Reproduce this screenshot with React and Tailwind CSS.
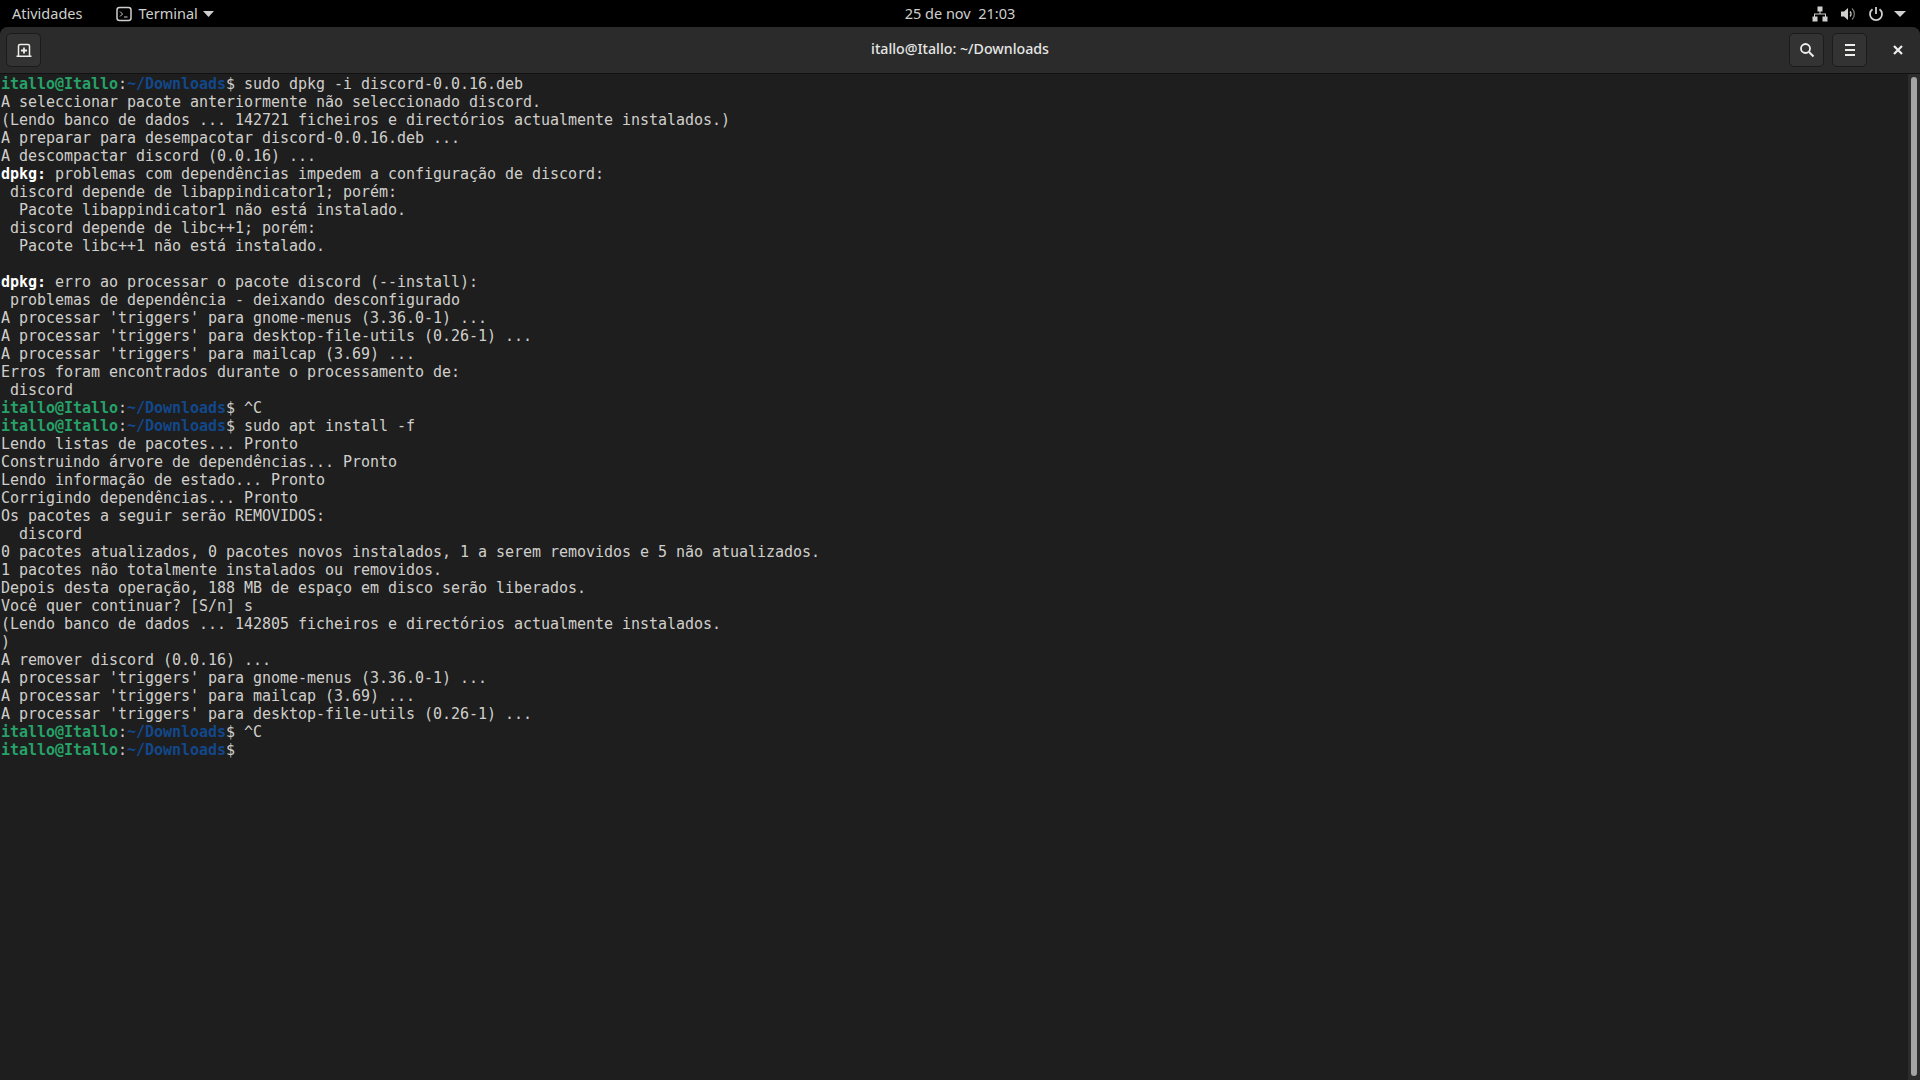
const lines = [
  { cmd: 'sudo dpkg -i discord-0.0.16.deb' },
  'A seleccionar pacote anteriormente não seleccionado discord.',
  '(Lendo banco de dados ... 142721 ficheiros e directórios actualmente instalados.)',
  'A preparar para desempacotar discord-0.0.16.deb ...',
  'A descompactar discord (0.0.16) ...',
  { bold: 'dpkg:', text: ' problemas com dependências impedem a configuração de discord:' },
  ' discord depende de libappindicator1; porém:',
  '  Pacote libappindicator1 não está instalado.',
  ' discord depende de libc++1; porém:',
  '  Pacote libc++1 não está instalado.',
  '',
  { bold: 'dpkg:', text: ' erro ao processar o pacote discord (--install):' },
  ' problemas de dependência - deixando desconfigurado',
  "A processar 'triggers' para gnome-menus (3.36.0-1) ...",
  "A processar 'triggers' para desktop-file-utils (0.26-1) ...",
  "A processar 'triggers' para mailcap (3.69) ...",
  'Erros foram encontrados durante o processamento de:',
  ' discord',
  { cmd: '^C' },
  { cmd: 'sudo apt install -f' },
  'Lendo listas de pacotes... Pronto',
  'Construindo árvore de dependências... Pronto',
  'Lendo informação de estado... Pronto',
  'Corrigindo dependências... Pronto',
  'Os pacotes a seguir serão REMOVIDOS:',
  '  discord',
  '0 pacotes atualizados, 0 pacotes novos instalados, 1 a serem removidos e 5 não atualizados.',
  '1 pacotes não totalmente instalados ou removidos.',
  'Depois desta operação, 188 MB de espaço em disco serão liberados.',
  'Você quer continuar? [S/n] s',
  '(Lendo banco de dados ... 142805 ficheiros e directórios actualmente instalados.',
  ')',
  'A remover discord (0.0.16) ...',
  "A processar 'triggers' para gnome-menus (3.36.0-1) ...",
  "A processar 'triggers' para mailcap (3.69) ...",
  "A processar 'triggers' para desktop-file-utils (0.26-1) ...",
  { cmd: '^C' },
  { cmd: '' },
];

function Line({ line }) {
  if (typeof line === 'string') {
    return <div className="h-[18px]">{line}</div>;
  }
  if (line.bold) {
    return (
      <div className="h-[18px]">
        <span className="font-bold text-white">{line.bold}</span>
        {line.text}
      </div>
    );
  }
  return (
    <div className="h-[18px]">
      <span className="font-bold text-[#26a269]">itallo@Itallo</span>
      :
      <span className="font-bold text-[#12488b]">~/Downloads</span>
      $ {line.cmd}
    </div>
  );
}

function HeaderButton({ children }) {
  return (
    <button className="w-[35px] h-[34px] flex items-center justify-center rounded-[5px] border border-[#1b1b1b] bg-[#333333] text-[#eeeeec]">
      {children}
    </button>
  );
}

export default function App() {
  return (
    <div className="w-[1920px] h-[1080px] overflow-hidden bg-black flex flex-col font-['Noto_Sans',sans-serif]">
      {/* top bar */}
      <div className="h-[27px] shrink-0 grid grid-cols-[1fr_auto_1fr] items-center text-[14.5px] text-[#cfcfcd]">
        <div className="flex items-center pl-[12px]">
          <span>Atividades</span>
          <svg className="ml-[34px]" width="16" height="16" viewBox="0 0 16 16" fill="none">
            <rect x="1" y="1.500" width="14" height="13" rx="2.500" stroke="currentColor" strokeWidth="1.500" />
            <path d="M4 5.500 6.500 8 4 10.500M8 11h3.500" stroke="currentColor" strokeWidth="1" />
          </svg>
          <span className="ml-[6px]">Terminal</span>
          <svg className="ml-[5px]" width="11" height="6" viewBox="0 0 11 6">
            <path d="M0 0h11L5.500 6z" fill="currentColor" />
          </svg>
        </div>
        <div>25 de nov&nbsp; 21:03</div>
        <div className="flex items-center justify-end gap-[12px] pr-[14px]">
          <svg width="16" height="16" viewBox="0 0 16 16" fill="currentColor">
            <path d="M5.500 0.500h5v5H8.500V7.500H14v3h1.500v5h-5v-5H13V8.500H3v2h2.500v5h-5v-5H2v-3h5.500v-2h-2z" />
          </svg>
          <svg width="16" height="16" viewBox="0 0 16 16" fill="none">
            <path d="M1 5.500h3L8 2v12l-4-3.500H1z" fill="currentColor" />
            <path d="M10 5.500a3.500 3.500 0 0 1 0 5" stroke="currentColor" strokeWidth="1.300" />
            <path d="M12 2.500a7.500 7.500 0 0 1 0 11" stroke="#777777" strokeWidth="1.300" />
          </svg>
          <svg width="16" height="16" viewBox="0 0 16 16" fill="none" stroke="currentColor" strokeWidth="1.800">
            <path d="M8 1v7" />
            <path d="M4.500 3.300a6 6 0 1 0 7 0" />
          </svg>
          <svg width="12" height="6" viewBox="0 0 12 6" className="-ml-[2px]">
            <path d="M0 0h12L6 6z" fill="currentColor" />
          </svg>
        </div>
      </div>

      {/* window */}
      <div className="flex-1 flex flex-col rounded-t-[8px] overflow-hidden bg-[#1e1e1e]">
        <div className="h-[47px] shrink-0 bg-[#2b2b2b] border-b border-[#111111] grid grid-cols-[1fr_auto_1fr] items-center">
          <div className="flex items-center pl-[6px]">
            <HeaderButton>
              <svg width="16" height="16" viewBox="0 0 16 16" fill="none" stroke="currentColor">
                <path d="M2.500 14V4a1.500 1.500 0 0 1 1.500-1.500h8A1.500 1.500 0 0 1 13.500 4v10" strokeWidth="1.500" />
                <path d="M0.500 14.300h15" strokeWidth="1.400" />
                <path d="M8 5.500v6M5 8.500h6" strokeWidth="1.800" />
              </svg>
            </HeaderButton>
          </div>
          <div className="pb-[2px] text-center text-[14.2px] font-medium text-[#e6e6e4]">itallo@Itallo: ~/Downloads</div>
          <div className="flex items-center justify-end gap-[8px]">
            <HeaderButton>
              <svg width="16" height="16" viewBox="0 0 16 16" fill="none" stroke="currentColor">
                <circle cx="6.500" cy="6.500" r="4.500" strokeWidth="1.800" />
                <path d="M10 10l4.500 4.500" strokeWidth="2" />
              </svg>
            </HeaderButton>
            <HeaderButton>
              <svg width="12" height="12" viewBox="0 0 12 12" fill="currentColor">
                <path d="M1 0h10v2H1zM1 5h10v2H1zM1 10h10v2H1z" />
              </svg>
            </HeaderButton>
            <div className="w-[45px] flex items-center justify-center text-[#eeeeec]">
              <svg width="10" height="10" viewBox="0 0 10 10" fill="none" stroke="currentColor" strokeWidth="2.200">
                <path d="M1 1l8 8M9 1l-8 8" />
              </svg>
            </div>
          </div>
        </div>

        <div className="flex-1 flex min-h-0">
          <div className="flex-1 pl-[1px] pt-[1px] text-[15px] tracking-[-0.03px] leading-[18px] whitespace-pre text-[#d0cfcc] font-['DejaVu_Sans_Mono',monospace]">
            {lines.map((line, i) => (
              <Line key={i} line={line} />
            ))}
          </div>
          <div className="w-[12px] shrink-0 bg-[#2c2c2c] pt-[3px] pb-[4px] pl-[3px] pr-[3px]">
            <div className="h-full rounded-full bg-[#a3a3a3]" />
          </div>
        </div>
      </div>
    </div>
  );
}
